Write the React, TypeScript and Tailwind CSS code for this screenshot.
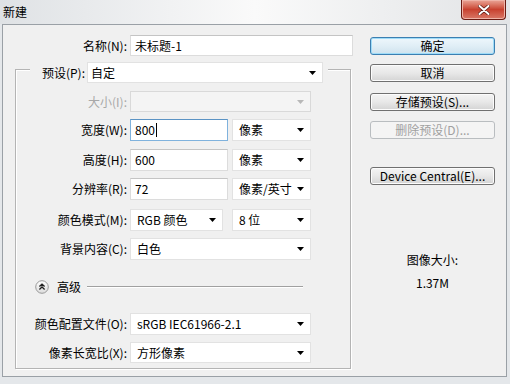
import React from 'react';

const FONT = { fontFamily: '"Noto Sans CJK SC", "Microsoft YaHei", sans-serif' };

function Arrow({ disabled = false }: { disabled?: boolean }) {
  return (
    <svg width="7" height="4" viewBox="0 0 7 4" className="shrink-0">
      <path d="M0 0h7L3.5 4z" fill={disabled ? '#b8b8b8' : '#000'} />
    </svg>
  );
}

function Select({ value, width, pl = 'pl-[6px]', disabled = false, h = 'h-[22px]' }: { value: string; width: string; pl?: string; disabled?: boolean; h?: string }) {
  return (
    <div
      className={`${width} ${h} ${pl} pr-[6px] flex items-center justify-between border ${
        disabled ? 'bg-[#f4f4f4] border-[#d9d9d9]' : 'bg-white border-[#e2e2e2]'
      }`}
    >
      <span className="text-[12px] leading-none text-black whitespace-nowrap">{value}</span>
      <Arrow disabled={disabled} />
    </div>
  );
}

function Input({ value, width, focused = false, h = 'h-[22px]' }: { value: string; width: string; focused?: boolean; h?: string }) {
  return (
    <div
      className={`${width} ${h} pl-[4px] flex items-center bg-white border ${
        focused ? 'border-[#7fb2dd] border-t-[#5b93c4]' : 'border-[#dcdcdc] border-t-[#c4c4c4]'
      }`}
    >
      <span className="text-[12px] leading-none text-black">{value}</span>
      {focused && <span className="ml-px w-px h-[14px] bg-black" />}
    </div>
  );
}

function Label({ text, width, disabled = false }: { text: string; width: string; disabled?: boolean }) {
  return (
    <div className={`${width} text-right text-[12px] leading-none whitespace-nowrap ${disabled ? 'text-[#a8a8a8]' : 'text-black'}`}>
      {text}
    </div>
  );
}

function Button({ text, kind = 'normal', className = '' }: { text: string; kind?: 'normal' | 'default' | 'disabled'; className?: string }) {
  const styles =
    kind === 'default'
      ? 'border-[#3c7fb1] bg-gradient-to-b from-[#eef7fc] via-[#e0eef6] to-[#cfe3ee] shadow-[inset_0_0_0_1px_#9fdcf8] text-black'
      : kind === 'disabled'
      ? 'border-[#b9bdc0] bg-[#f4f4f4] text-[#a0a0a0]'
      : 'border-[#707070] bg-gradient-to-b from-[#f4f4f4] via-[#e8e8e8] to-[#d4d4d4] shadow-[inset_0_0_0_1px_#fcfcfc] text-black';
  return (
    <div className={`w-[125px] h-[18px] rounded-[3px] border flex items-center justify-center text-[12px] leading-none ${styles} ${className}`}>
      {text}
    </div>
  );
}

export default function App() {
  return (
    <div style={FONT} className="w-[510px] h-[384px] bg-[#e4e7ea] flex flex-col overflow-hidden">
      {/* Title bar */}
      <div className="h-[24px] flex items-start justify-between bg-gradient-to-r from-[#dfe2e5] via-[#fafafa] to-[#e2e4e6]">
        <div className="pl-[3px] pt-[5px] text-[12px] leading-[14px] text-black">新建</div>
        <div className="mr-[4px] w-[45px] h-[20px] rounded-b-[4px] border border-t-0 border-[#6b1b12] bg-gradient-to-b from-[#e9a597] via-[#c8412f] to-[#d97766] shadow-[inset_0_0_0_1px_#efb4a8] flex items-center justify-center">
          <svg width="12" height="10" viewBox="0 0 12 10">
            <path d="M1.5 1l9 8M10.5 1l-9 8" stroke="#5a1a12" strokeWidth="3.4" strokeLinecap="round" />
            <path d="M1.5 1l9 8M10.5 1l-9 8" stroke="#fff" strokeWidth="2" strokeLinecap="round" />
          </svg>
        </div>
      </div>

      {/* Client area */}
      <div className="ml-[2px] w-[505px] h-[353px] border border-[#9aa0a6] bg-[#f0f0f0] flex">
        {/* Left column */}
        <div className="w-[355px] pt-[10px] flex flex-col">
          <div className="h-[21px] flex items-center">
            <Label text="名称(N):" width="w-[124px]" />
            <div className="ml-[3px]">
              <Input value="未标题-1" width="w-[223px]" h="h-[21px]" />
            </div>
          </div>

          {/* Group box */}
          <div className="mt-[13px] ml-[12px] w-[336px] h-[300px] border border-[#b4b4b4] shadow-[inset_1px_1px_0_#fff,1px_1px_0_#fff] flex flex-col">
            <div className="-mt-[8px] ml-[14px] w-[298px] px-[5px] bg-[#f0f0f0] flex items-center">
              <Label text="预设(P):" width="w-[50px]" />
              <div className="ml-[2px]">
                <Select value="自定" width="w-[236px]" pl="pl-[3px]" h="h-[21px]" />
              </div>
            </div>

            <div className="mt-[8px] flex items-center">
              <Label text="大小(I):" width="w-[111px]" disabled />
              <div className="ml-[3px]">
                <Select value="" width="w-[181px]" disabled h="h-[21px]" />
              </div>
            </div>

            <div className="mt-[7px] flex items-center">
              <Label text="宽度(W):" width="w-[111px]" />
              <div className="ml-[3px] flex gap-[4px]">
                <Input value="800" width="w-[98px]" focused />
                <Select value="像素" width="w-[79px]" />
              </div>
            </div>

            <div className="mt-[8px] flex items-center">
              <Label text="高度(H):" width="w-[111px]" />
              <div className="ml-[3px] flex gap-[4px]">
                <Input value="600" width="w-[98px]" />
                <Select value="像素" width="w-[79px]" />
              </div>
            </div>

            <div className="mt-[7px] flex items-center">
              <Label text="分辨率(R):" width="w-[111px]" />
              <div className="ml-[3px] flex gap-[4px]">
                <Input value="72" width="w-[98px]" />
                <Select value="像素/英寸" width="w-[79px]" />
              </div>
            </div>

            <div className="mt-[9px] flex items-center">
              <Label text="颜色模式(M):" width="w-[111px]" />
              <div className="ml-[3px] flex gap-[9px]">
                <Select value="RGB 颜色" width="w-[93px]" />
                <Select value="8 位" width="w-[79px]" />
              </div>
            </div>

            <div className="mt-[7px] flex items-center">
              <Label text="背景内容(C):" width="w-[111px]" />
              <div className="ml-[3px]">
                <Select value="白色" width="w-[181px]" />
              </div>
            </div>

            {/* Advanced */}
            <div className="mt-[19px] h-[16px] ml-[19px] flex items-center">
              <svg width="14" height="14" viewBox="0 0 14 14" className="shrink-0">
                <defs>
                  <linearGradient id="adv" x1="0" y1="0" x2="0" y2="1">
                    <stop offset="0" stopColor="#ffffff" />
                    <stop offset="1" stopColor="#dcdcdc" />
                  </linearGradient>
                </defs>
                <circle cx="7" cy="7" r="6.3" fill="url(#adv)" stroke="#9a9a9a" strokeWidth="1" />
                <path d="M4.4 6.6L7 4.2l2.6 2.4M4.4 9.4L7 7l2.6 2.4" fill="none" stroke="#222" strokeWidth="1.3" />
              </svg>
              <span className="ml-[8px] text-[12px] leading-none text-black">高级</span>
              <div className="ml-[6px] w-[216px] h-[2px] border-t border-[#a0a0a0] bg-white" />
            </div>

            <div className="mt-[18px] flex items-center">
              <Label text="颜色配置文件(O):" width="w-[111px]" />
              <div className="ml-[3px]">
                <Select value="sRGB IEC61966-2.1" width="w-[181px]" />
              </div>
            </div>

            <div className="mt-[7px] flex items-center">
              <Label text="像素长宽比(X):" width="w-[111px]" />
              <div className="ml-[3px]">
                <Select value="方形像素" width="w-[181px]" h="h-[21px]" />
              </div>
            </div>
          </div>
        </div>

        {/* Right column */}
        <div className="ml-[12px] pt-[12px] flex flex-col">
          <Button text="确定" kind="default" />
          <Button text="取消" className="mt-[9px]" />
          <Button text="存储预设(S)..." className="mt-[11px]" />
          <Button text="删除预设(D)..." kind="disabled" className="mt-[10px]" />
          <Button text="Device Central(E)..." className="mt-[28px]" />
          <div className="mt-[68px] w-[125px] text-center text-[12px] leading-[14px] text-black">图像大小:</div>
          <div className="mt-[9px] w-[125px] text-center text-[12px] leading-[14px] text-black">1.37M</div>
        </div>
      </div>
    </div>
  );
}
